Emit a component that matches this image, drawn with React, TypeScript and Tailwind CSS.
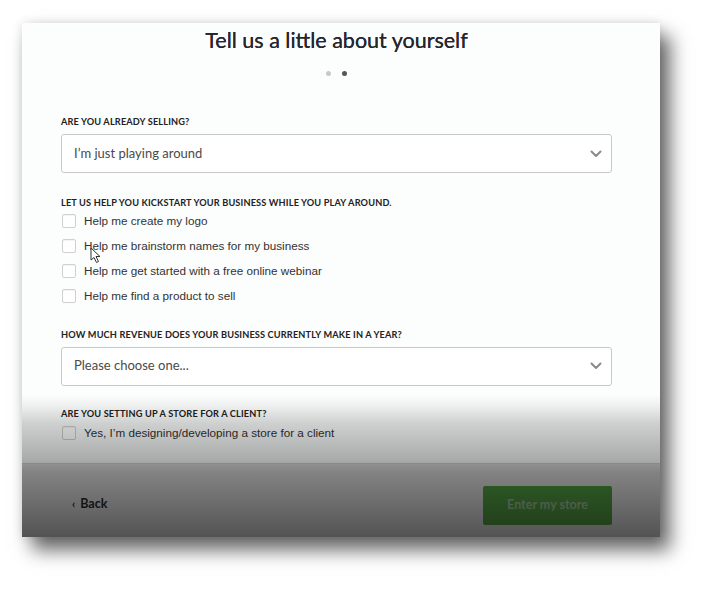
import React from "react";

const Chevron = () => (
  <svg width="12" height="8" viewBox="0 0 12 8" className="shrink-0">
    <path d="M1.5 1.5 L6 6 L10.5 1.5" fill="none" stroke="#8a8a8a" strokeWidth="2" strokeLinecap="round" strokeLinejoin="round" />
  </svg>
);

const Label = ({ children, className = "" }: { children: React.ReactNode; className?: string }) => (
  <div className={`h-[12px] leading-[12px] text-[9.2px] font-bold uppercase text-[#222] tracking-[0.15px] whitespace-nowrap ${className}`} style={{ fontFamily: "Lato, 'Open Sans', sans-serif" }}>
    {children}
  </div>
);

const Select = ({ text, className = "" }: { text: string; className?: string }) => (
  <div className={`h-[39px] w-full rounded-[3px] border border-[#c9c9c9] bg-white flex items-center justify-between pl-[12px] pr-[9px] ${className}`}>
    <span className="text-[13px] text-[#4a4a4a]" style={{ fontFamily: "Lato, sans-serif" }}>{text}</span>
    <Chevron />
  </div>
);

const Check = ({ text }: { text: string }) => (
  <div className="h-[25px] flex items-center gap-[8px]">
    <span className="ml-[1px] w-[14px] h-[14px] rounded-[2px] border border-[#d0d0d0] bg-white shadow-[inset_0_1px_1px_rgba(0,0,0,0.05)] shrink-0" />
    <span className="text-[11.7px] text-[#333]" style={{ fontFamily: "'Liberation Sans', Arial, sans-serif" }}>{text}</span>
  </div>
);

export default function App() {
  return (
    <div className="w-[717px] h-[592px] bg-white pt-[23px] pl-[22px]">
      <div className="relative w-[638px] h-[514px] bg-[#fcfdfd] overflow-hidden shadow-[10px_13px_18px_rgba(0,0,0,0.6),0_0_10px_rgba(0,0,0,0.12)]">
        <div className="pl-[39px] pr-[48px]">
          <div className="pt-[3px] h-[31px] leading-[28px] text-[21.5px] text-center text-[#26262c] [text-shadow:0_0_0.3px_#26262c]" style={{ fontFamily: "Lato, sans-serif" }}>
            Tell us a little about yourself
          </div>
          <div className="mt-[17px] flex justify-center gap-[11px]">
            <span className="w-[5px] h-[5px] rounded-full bg-[#c8c8c8]" />
            <span className="w-[5px] h-[5px] rounded-full bg-[#555]" />
          </div>
          <Label className="mt-[40px]">Are you already selling?</Label>
          <Select text="I’m just playing around" className="mt-[6px]" />
          <Label className="mt-[24px]">Let us help you kickstart your business while you play around.</Label>
          <div className="-mt-[0.5px]">
            <Check text="Help me create my logo" />
            <Check text="Help me brainstorm names for my business" />
            <Check text="Help me get started with a free online webinar" />
            <Check text="Help me find a product to sell" />
          </div>
          <Label className="mt-[20px]">How much revenue does your business currently make in a year?</Label>
          <Select text="Please choose one..." className="mt-[6px]" />
          <Label className="mt-[22px]">Are you setting up a store for a client?</Label>
          <div className="mt-[1px]">
            <Check text="Yes, I’m designing/developing a store for a client" />
          </div>
        </div>
        <div className="mt-[17px] h-[75px] border-t border-[#d4d4d4] bg-[#e2e2e2] flex items-start justify-between pl-[50px] pr-[48px]">
          <div className="mt-[31px] flex items-center gap-[5px] text-[12.5px] font-bold text-[#2a2a2a]" style={{ fontFamily: "Lato, sans-serif" }}>
            <span className="text-[11px]">‹</span>
            <span>Back</span>
          </div>
          <div className="mt-[22px] w-[129px] h-[39px] rounded-[2px] bg-[#529f43] flex items-center justify-center text-[12.5px] font-bold text-[#a2c39a]" style={{ fontFamily: "Lato, sans-serif" }}>
            Enter my store
          </div>
        </div>
        <div className="pointer-events-none absolute left-0 right-0 bottom-0 h-[142px] bg-[linear-gradient(to_bottom,rgba(0,0,0,0)_0%,rgba(0,0,0,0.06)_8%,rgba(0,0,0,0.18)_20%,rgba(0,0,0,0.33)_46%,rgba(0,0,0,0.42)_54%,rgba(0,0,0,0.63)_100%)]" />
        <svg className="absolute left-[68px] top-[224px]" width="12" height="17" viewBox="0 0 12 17">
          <path d="M1 1 L1 13 L4 10.5 L6.5 15.5 L8.5 14.5 L6 9.5 L10 9.5 Z" fill="white" stroke="#333" strokeWidth="1" strokeLinejoin="round" />
        </svg>
      </div>
    </div>
  );
}
